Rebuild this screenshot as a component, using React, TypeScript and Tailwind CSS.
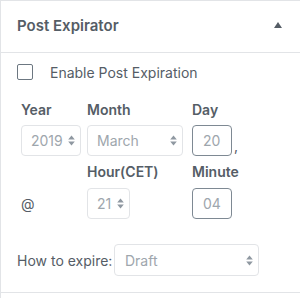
import React from 'react';

function Arrows() {
    return (
        <svg width="7" height="11" viewBox="0 0 7 11" className="shrink-0">
            <path d="M3.5 0.5 L6.8 4.6 H0.2 Z" fill="#8f98a1" />
            <path d="M3.5 10.5 L6.8 6.4 H0.2 Z" fill="#8f98a1" />
        </svg>
    );
}

function FakeSelect({ value, className }: { value: string; className: string }) {
    return (
        <div
            className={`flex items-center justify-between rounded-[4px] border border-[#e2e4e7] bg-white pl-[9px] pr-[5px] text-[14px] text-[#9ea6ad] ${className}`}
        >
            <span>{value}</span>
            <Arrows />
        </div>
    );
}

function SmallInput({ value }: { value: string }) {
    return (
        <div className="flex h-[31px] w-10 items-center rounded-[4px] border border-[#7e8993] bg-white pl-[10px] text-[14px] text-[#9ea6ad]">
            {value}
        </div>
    );
}

export default function App() {
    return (
        <div className="h-[298px] w-[300px] border-l border-t border-[#e2e4e7] bg-white font-['Inter',sans-serif] text-[#555d66]">
            <div className="flex h-[52px] items-center justify-between border-b border-[#e2e4e7] pl-4 pr-[18px]">
                <h2 className="text-[15px] font-semibold">Post Expirator</h2>
                <svg width="8" height="6" viewBox="0 0 8 6" className="-mt-[3px]">
                    <path d="M4 0 L8 6 H0 Z" fill="#555d66" />
                </svg>
            </div>

            <div className="border-b border-[#e2e4e7] pb-4 pl-4 pt-[11px]">
                <label className="flex h-4 items-center gap-[17px] text-[14px]">
                    <span className="h-4 w-4 rounded-[2px] border-[1.5px] border-[#6c7781]" />
                    Enable Post Expiration
                </label>

                <div className="mt-5 grid grid-cols-[66px_105px_auto] pl-1 text-[14px]">
                    <span className="h-5 font-semibold leading-5">Year</span>
                    <span className="h-5 font-semibold leading-5">Month</span>
                    <span className="h-5 font-semibold leading-5">Day</span>

                    <FakeSelect value="2019" className="mt-[5px] h-[31px] w-[60px]" />
                    <FakeSelect value="March" className="mt-[5px] h-[31px] w-[96px]" />
                    <div className="mt-[5px] flex items-end">
                        <SmallInput value="20" />
                        <span className="mb-[3px] ml-[2px] leading-none">,</span>
                    </div>

                    <span />
                    <span className="mt-[6px] h-5 font-semibold leading-5">Hour(CET)</span>
                    <span className="mt-[6px] h-5 font-semibold leading-5">Minute</span>

                    <div className="mt-[6px] flex h-[31px] items-center">@</div>
                    <FakeSelect value="21" className="mt-[6px] h-[31px] w-[43px]" />
                    <div className="mt-[6px]">
                        <SmallInput value="04" />
                    </div>
                </div>

                <div className="mt-[25px] flex items-center">
                    <span className="w-[97px] shrink-0 whitespace-nowrap text-[14px]">How to expire:</span>
                    <FakeSelect value="Draft" className="h-8 w-[145px] pl-[10px]" />
                </div>
            </div>
        </div>
    );
}
